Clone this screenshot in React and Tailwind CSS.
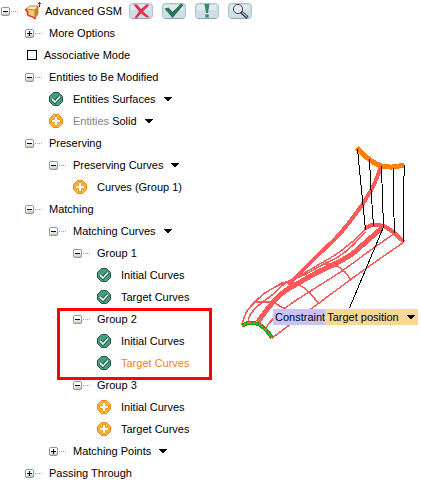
import React, { useState } from "react";

function Toggle({ open, label }) {
  return (
    <button type="button" aria-label={label} aria-expanded={open} className="flex h-[9px] w-6 shrink-0 items-center">
      <svg width="18" height="9" viewBox="0 0 18 9" shapeRendering="crispEdges">
        <path d="M1 0h7v1H1zM1 8h7v1H1zM0 1h1v7H0zM8 1h1v7H8z" fill="#7b9ebd" />
        <rect x="1" y="1" width="7" height="7" fill="#ffffff" />
        <rect x="2" y="5" width="6" height="3" fill="#e2dcd2" />
        <rect x="1" y="7" width="7" height="1" fill="#cfc6ba" />
        <path d="M2 4h5v1H2z" fill="#000" />
        {!open && <path d="M4 2h1v5H4z" fill="#000" />}
        <path d="M10 4h1v1h-1zM12 4h1v1h-1zM14 4h1v1h-1zM16 4h1v1h-1z" fill="#8fb0cc" />
      </svg>
    </button>
  );
}

function Status({ done }) {
  return (
    <span className="flex w-6 shrink-0">
      <svg width="14" height="14" viewBox="0 0 14 14" role="img" aria-label={done ? "Done" : "To add"}>
        <path
          d="M4.500 .5h5l4 4v5l-4 4h-5l-4-4v-5z"
          fill={done ? "#42a080" : "#ffb53a"}
          stroke={done ? "#255543" : "#ec8616"}
        />
        {done ? (
          <>
            <path d="M3 7l3 3L11 4.500" fill="none" stroke="#255543" strokeWidth="3.600" />
            <path d="M3 7l3 3L11 4.500" fill="none" stroke="#e8ecea" strokeWidth="1.800" />
          </>
        ) : (
          <path d="M5.500 2.500h3v3h3v3h-3v3h-3v-3h-3v-3h3z" fill="#fff" stroke="#f09a28" />
        )}
      </svg>
    </span>
  );
}

function Caret({ label }) {
  return (
    <button type="button" aria-label={label} className="ml-2 flex h-3 w-2 shrink-0 items-center">
      <svg width="8" height="4" viewBox="0 0 8 4" shapeRendering="crispEdges">
        <path d="M0 0h8v1H0zM1 1h6v1H1zM2 2h4v1H2zM3 3h2v1H3z" fill="#000" />
      </svg>
    </button>
  );
}

function Item({ toggle, done, label, muted, active, menu, marked, children }) {
  return (
    <li className="relative">
      <div className="flex h-[22px] items-center whitespace-nowrap">
        {toggle ? <Toggle open={toggle === "open"} label={label} /> : <Status done={done} />}
        <span className={active ? "text-[#ff8010]" : ""}>
          {muted && <span className="text-[#848484]">{muted} </span>}
          {label}
        </span>
        {menu && <Caret label={label + " menu"} />}
      </div>
      {children && <ul className="pl-6">{children}</ul>}
      {marked && <span className="pointer-events-none absolute -bottom-1.5 -left-4 top-0 w-[155px] border-3 border-[#ff0000]" />}
    </li>
  );
}

function ToolButton({ label, children }) {
  return (
    <button type="button" aria-label={label} className="h-4 w-6">
      <svg width="24" height="16" viewBox="0 0 24 16">
        <rect x=".5" y=".5" width="23" height="15" rx="3" fill="#cfdde4" stroke="#a5c3d6" />
        <path d="M3 2h18v5H2V3z" fill="#e4e9ea" />
        <path d="M3 15.500h18" stroke="#8aa4b4" />
        {children}
      </svg>
    </button>
  );
}

function Header() {
  return (
    <header className="flex h-[22px] items-center whitespace-nowrap pl-px">
      <Toggle open label="Advanced GSM" />
      <svg width="16" height="18" viewBox="0 0 16 18" className="shrink-0">
        <path d="M1 7l4-3h8v8l-3 5-6-4z" fill="#f9c878" />
        <path d="M1 7l4-3h8l-3 4z" fill="#ffe9b8" />
        <path d="M10 8l3-4v8l-3 4z" fill="#c98e34" />
        <path d="M1 7l4-3h8v8l-3 4V8L1 7M10 8l3-4" fill="none" stroke="#b07020" strokeWidth=".8" />
        <path d="M0 7.500c4 1 2 4 3 5.500s5 1 7.500 4" fill="none" stroke="#ee3a24" strokeWidth="1.800" />
        <path d="M14.500 0v5M13 1.500h3" stroke="#c00020" />
      </svg>
      <h1 className="ml-1 w-[84px]">Advanced GSM</h1>
      <div className="flex gap-[9px]">
        <ToolButton label="Cancel">
          <path d="M4.500 1.500L8 1.500 12 6 18 1 20 2.500 14 8.500 20.500 14 17.500 14.500 12 10.500 8 15 5.500 14.500 10 8.500z" fill="#e0304c" />
        </ToolButton>
        <ToolButton label="Apply">
          <path d="M2.500 5.500L6.500 4.500 10.500 9 19 .5 21.500 2 10.500 15z" fill="#287458" />
        </ToolButton>
        <ToolButton label="Information">
          <path d="M9.500 1h5l-1.500 9h-2zM10.300 11.500h3.400v3h-3.400z" fill="#2f8a6a" />
        </ToolButton>
        <ToolButton label="Preview">
          <circle cx="10" cy="6" r="4.600" fill="#e2eafa" stroke="#44444c" />
          <path d="M13 9l6.500 5.500" stroke="#333340" strokeWidth="3.200" />
          <path d="M14 9.500l5 4.300" stroke="#b4bcd8" strokeWidth="1.200" />
        </ToolButton>
      </div>
    </header>
  );
}

// Catmull-Rom spline through the given points
function spline(p) {
  let d = `M${p[0][0]} ${p[0][1]}`;
  for (let i = 0; i < p.length - 1; i++) {
    const a = p[i - 1] || p[i];
    const b = p[i];
    const c = p[i + 1];
    const e = p[i + 2] || c;
    d += `C${b[0] + (c[0] - a[0]) / 6} ${b[1] + (c[1] - a[1]) / 6} ${c[0] - (e[0] - b[0]) / 6} ${c[1] - (e[1] - b[1]) / 6} ${c[0]} ${c[1]}`;
  }
  return d;
}

const back = [[381, 166], [376, 180], [370, 192], [362, 205], [348, 224], [335, 239], [318, 255], [302, 271], [288, 285]];
const middle = [[382, 228], [368, 240], [352, 254], [335, 264], [318, 272], [302, 281], [285, 291], [275, 300], [265, 312], [258, 322]];
const heel = [[365, 229], [369, 226], [374, 225], [383, 226], [393, 232], [404, 242]];
const toe = [[242, 326], [248, 323], [258, 324], [266, 330], [272, 338]];
const rim = [[357, 148], [365, 156], [373, 162], [382, 166], [392, 167], [404, 165]];

const thin = [
  [[367, 227], [352, 242], [335, 255], [318, 265], [301, 275], [288, 282], [279, 285], [265, 293], [255, 302], [247, 311], [242, 324]],
  [[365, 232], [352, 246], [338, 257], [324, 264], [304, 275], [287, 282], [272, 295], [259, 305], [250, 315], [248, 323]],
  [[395, 233], [368, 252], [342, 271], [309, 292], [285, 308], [270, 322], [265, 330]],
  [[404, 242], [361, 272], [319, 303], [272, 338]],
  [[323, 264], [335, 265], [345, 272], [351, 280]],
  [[279, 284], [288, 282], [299, 285], [309, 292], [319, 304]],
  [[256, 302], [271, 302], [278, 305], [285, 309]],
];

const black = [
  "M357.500 149L361.500 190L365.500 230",
  "M369.500 159L371 190L373.500 226",
  "M381.500 166L382.500 199L383.500 227L349.500 308",
  "M393.500 168V200L394.500 233",
  "M404.500 165L403.500 188V242",
];

function Drawing() {
  return (
    <svg viewBox="240 22 181 330" className="block h-[330px] w-[181px]" shapeRendering="crispEdges" fill="none" role="img" aria-label="Surface preview">
      <g stroke="#ff5a5a">
        {thin.map((p, i) => <path key={i} d={spline(p)} strokeWidth="1.500" />)}
        <path d={spline(back)} strokeWidth="4" />
        <path d={spline(middle)} strokeWidth="5" />
        <path d={spline(heel)} strokeWidth="4" />
      </g>
      <path d={spline(rim)} stroke="#ff8000" strokeWidth="5" />
      <path d={spline(toe)} stroke="#00a800" strokeWidth="4" />
      <path d={spline(toe)} stroke="#ff5a5a" strokeWidth="1.500" strokeDasharray="5 1" />
      {black.map((d) => <path key={d} d={d} stroke="#000" />)}
    </svg>
  );
}

export default function App() {
  const [associative, setAssociative] = useState(false);
  return (
    <main className="overflow-hidden bg-white font-['Liberation_Sans',Arial,sans-serif] text-[11px] leading-[14px] text-black">
      <Header />
      <div className="-mb-0.5 flex">
        <nav aria-label="Specification tree" className="w-60 shrink-0">
          <ul className="pl-[25px]">
            <Item toggle="closed" label="More Options" />
            <li>
              <label className="flex h-[22px] items-center gap-[7px] pl-0.5">
                <input
                  type="checkbox"
                  checked={associative}
                  onChange={(e) => setAssociative(e.target.checked)}
                  className="size-2.5 appearance-none border border-black bg-white checked:bg-black"
                />
                Associative Mode
              </label>
            </li>
            <Item toggle="open" label="Entities to Be Modified">
              <Item done label="Entities Surfaces" menu />
              <Item muted="Entities" label="Solid" menu />
            </Item>
            <Item toggle="open" label="Preserving">
              <Item toggle="open" label="Preserving Curves" menu>
                <Item label="Curves (Group 1)" />
              </Item>
            </Item>
            <Item toggle="open" label="Matching">
              <Item toggle="open" label="Matching Curves" menu>
                <Item toggle="open" label="Group 1">
                  <Item done label="Initial Curves" />
                  <Item done label="Target Curves" />
                </Item>
                <Item toggle="open" label="Group 2" marked>
                  <Item done label="Initial Curves" />
                  <Item done label="Target Curves" active />
                </Item>
                <Item toggle="open" label="Group 3">
                  <Item label="Initial Curves" />
                  <Item label="Target Curves" />
                </Item>
              </Item>
              <Item toggle="closed" label="Matching Points" menu />
            </Item>
            <Item toggle="closed" label="Passing Through" />
          </ul>
        </nav>
        <figure className="relative flex-1">
          <Drawing />
          <figcaption className="absolute left-[33px] top-[287px] flex h-4 items-center whitespace-nowrap">
            <span className="flex h-4 items-center bg-[#c6c3ff] pl-0.5">Constraint</span>
            <span className="flex h-4 items-center bg-[#f7d794] pl-0.5 pr-[3px]">
              Target position
              <Caret label="Target position menu" />
            </span>
          </figcaption>
        </figure>
      </div>
    </main>
  );
}
